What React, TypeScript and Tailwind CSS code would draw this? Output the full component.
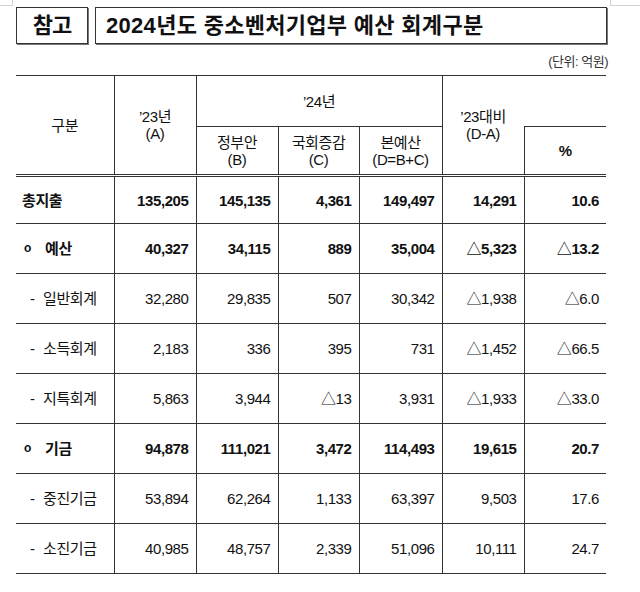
import clsx from "clsx";

const font = { fontFamily: '"Liberation Sans", "Noto Sans CJK KR", sans-serif' };

type Row = {
  label: string;
  kind: "total" | "group" | "item";
  values: string[];
};

const rows: Row[] = [
  { label: "총지출", kind: "total", values: ["135,205", "145,135", "4,361", "149,497", "14,291", "10.6"] },
  { label: "예산", kind: "group", values: ["40,327", "34,115", "889", "35,004", "△5,323", "△13.2"] },
  { label: "일반회계", kind: "item", values: ["32,280", "29,835", "507", "30,342", "△1,938", "△6.0"] },
  { label: "소득회계", kind: "item", values: ["2,183", "336", "395", "731", "△1,452", "△66.5"] },
  { label: "지특회계", kind: "item", values: ["5,863", "3,944", "△13", "3,931", "△1,933", "△33.0"] },
  { label: "기금", kind: "group", values: ["94,878", "111,021", "3,472", "114,493", "19,615", "20.7"] },
  { label: "중진기금", kind: "item", values: ["53,894", "62,264", "1,133", "63,397", "9,503", "17.6"] },
  { label: "소진기금", kind: "item", values: ["40,985", "48,757", "2,339", "51,096", "10,111", "24.7"] },
];

function RowLabel({ row }: { row: Row }) {
  if (row.kind === "total") return <span className="pl-[6px]">{row.label}</span>;
  if (row.kind === "group")
    return (
      <span className="flex items-center pl-[8px]">
        <span className="w-[21px] text-[12px]">o</span>
        <span>{row.label}</span>
      </span>
    );
  return (
    <span className="flex items-center pl-[14px]">
      <span className="w-[13px]">-</span>
      <span>{row.label}</span>
    </span>
  );
}

export default function App() {
  return (
    <div className="relative h-[592px] w-[640px] overflow-hidden bg-white text-[#111]" style={font}>
      <div className="absolute left-0 top-[5px] h-px w-[12px] bg-[#d4d4d4]" />
      <div className="absolute left-[12px] top-0 h-[6px] w-px bg-[#d4d4d4]" />
      <div className="absolute right-0 top-[5px] h-px w-[30px] bg-[#d4d4d4]" />
      <div className="absolute left-[610px] top-0 h-[6px] w-px bg-[#d4d4d4]" />

      <div className="flex gap-[7px] pl-4 pt-[7px]">
        <div className="flex h-[37px] w-[72px] items-center justify-center border border-[#333] text-[22px] font-bold tracking-[-1px] shadow-[1px_1px_0_#777]">
          참고
        </div>
        <div className="flex h-[37px] w-[512px] items-center border border-[#333] pl-[10px] text-[22px] font-bold tracking-[0.3px] shadow-[1px_1px_0_#777]">
          2024년도 중소벤처기업부 예산 회계구분
        </div>
      </div>

      <div className="mt-[10px] pr-[32px] text-right text-[13px] leading-4 tracking-[-0.5px] text-[#333]">(단위: 억원)</div>

      <table className="ml-4 mt-[5px] w-[590px] table-fixed border-collapse border-0 text-[15px] leading-[17px] tracking-[-0.4px]">
        <colgroup>
          <col className="w-[98px]" />
          <col className="w-[82px]" />
          <col className="w-[82px]" />
          <col className="w-[81px]" />
          <col className="w-[83px]" />
          <col className="w-[82px]" />
          <col className="w-[82px]" />
        </colgroup>
        <thead>
          <tr className="h-[51px]">
            <th rowSpan={2} className="border-t border-r border-b-[3px] border-l-0 border-double border-[#333] font-normal">
              구분
            </th>
            <th rowSpan={2} className="border-t border-r border-b-[3px] border-double border-[#333] font-normal">
              ’23년
              <br />
              (A)
            </th>
            <th colSpan={3} className="border-t border-r border-b border-[#333] font-normal">
              ’24년
            </th>
            <th rowSpan={2} className="border-t border-b-[3px] border-double border-[#333] font-normal">
              ’23대비
              <br />
              (D-A)
            </th>
            <th className="border-t border-r-0 border-[#333]" />
          </tr>
          <tr className="h-[49px]">
            <th className="border-r border-b-[3px] border-double border-[#333] font-normal">
              정부안
              <br />
              (B)
            </th>
            <th className="border-r border-b-[3px] border-double border-[#333] font-normal">
              국회증감
              <br />
              (C)
            </th>
            <th className="border-r border-b-[3px] border-double border-[#333] font-normal">
              본예산
              <br />
              (D=B+C)
            </th>
            <th className="border-l border-t border-b-[3px] border-r-0 border-double border-[#333] font-bold">%</th>
          </tr>
        </thead>
        <tbody>
          {rows.map((row, i) => (
            <tr key={row.label} className={clsx(i === 0 ? "h-[48px]" : "h-[50px]", row.kind !== "item" && "font-bold")}>
              <td className="border-b border-r border-l-0 border-[#333]">
                <RowLabel row={row} />
              </td>
              {row.values.map((v, j) => (
                <td
                  key={j}
                  className={clsx(
                    "border-b border-[#333] pr-[7px] text-right",
                    j < row.values.length - 1 ? "border-r" : "border-r-0"
                  )}
                >
                  {v}
                </td>
              ))}
            </tr>
          ))}
        </tbody>
      </table>
    </div>
  );
}
